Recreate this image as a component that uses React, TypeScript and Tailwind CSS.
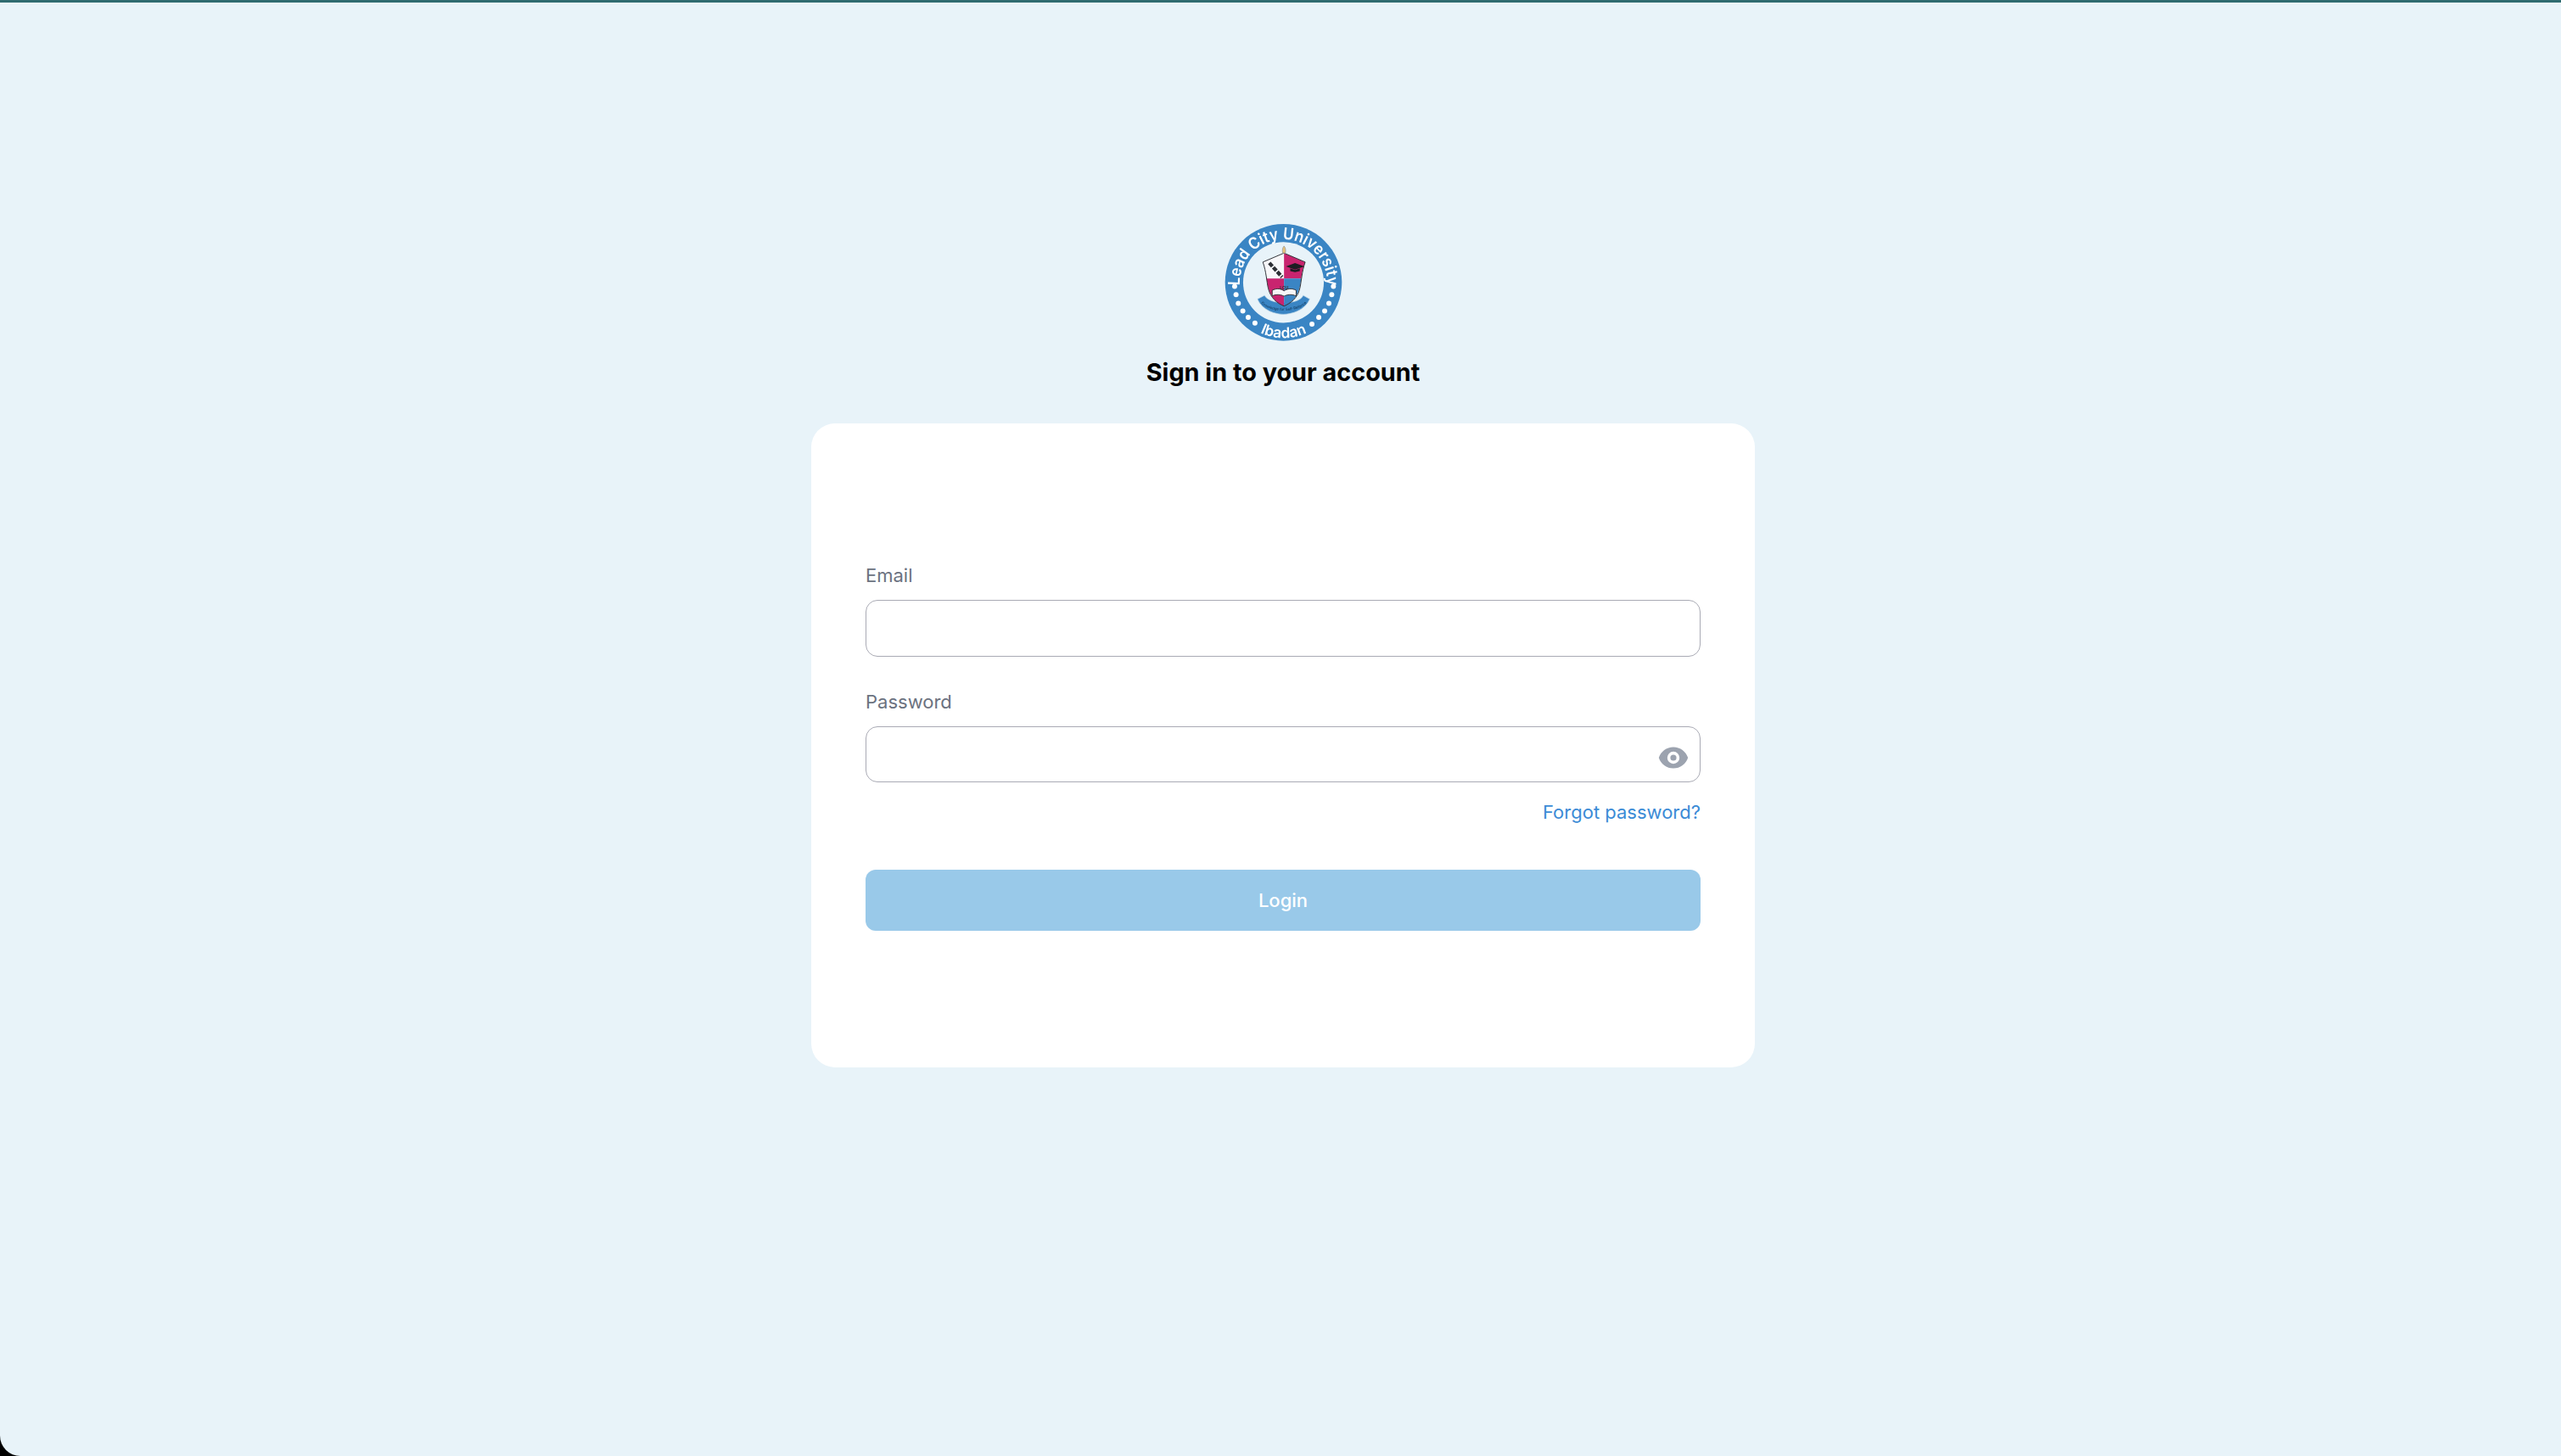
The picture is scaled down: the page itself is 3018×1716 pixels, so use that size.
import { HiEye } from 'react-icons/hi';

function Logo() {
  const dots = [
    [102, 263], [107, 292], [115, 323], [131, 350], [150, 373], [174, 393],
    [452, 263], [446, 292], [436, 323], [421, 350], [400, 373], [376, 397],
  ];
  return (
    <svg viewBox="63 33 424 430" className="h-[143px] w-[141px] blur-[0.4px]">
      <defs>
        <path id="arc-top" d="M 122 276 A 155 155 0 1 1 428 276" />
        <path id="arc-bottom" d="M 78 249 A 197 197 0 0 0 472 249" />
        <path id="arc-ribbon" d="M 195 322 C 225 358 325 358 358 322" />
      </defs>
      <circle cx="275" cy="249" r="207" fill="#3a85c4" />
      <circle cx="275" cy="249" r="143" fill="#e8f3f9" />
      <text fill="#fff" fontFamily="Inter, sans-serif" fontWeight="600" fontSize="57">
        <textPath href="#arc-top" startOffset="50%" textAnchor="middle" textLength="505" lengthAdjust="spacingAndGlyphs">Lead City University</textPath>
      </text>
      <text fill="#fff" fontFamily="Inter, sans-serif" fontWeight="600" fontSize="52">
        <textPath href="#arc-bottom" startOffset="50%" textAnchor="middle">Ibadan</textPath>
      </text>
      {dots.map(([x, y]) => (
        <circle key={`${x}-${y}`} cx={x} cy={y} r="9" fill="#fff" />
      ))}
      {/* crest: ribbon sits behind the shield */}
      <path d="M183 308 L208 295 C225 330 330 330 345 295 L368 308 C350 350 300 362 275 362 C250 362 200 350 183 308Z" fill="#3a85c4" stroke="#b9d4e6" strokeWidth="2" />
      <text fill="#123a5c" fontFamily="Inter, sans-serif" fontSize="13">
        <textPath href="#arc-ribbon" startOffset="50%" textAnchor="middle">Knowledge for Self-Reliance</textPath>
      </text>
      <path d="M202 177 L277 145 L277 235 L215 235 C213 215 208 195 202 177Z" fill="#f7f7f9" />
      <path d="M277 145 L352 177 C345 195 340 215 338 235 L277 235Z" fill="#c9246f" />
      <path d="M215 235 L277 235 L277 333 C245 322 222 295 215 235Z" fill="#c9246f" />
      <path d="M277 235 L338 235 C332 295 308 322 277 333Z" fill="#3a85c4" />
      <path d="M202 177 L277 145 L352 177 C340 210 338 250 333 270 C325 305 300 323 277 333 C254 323 229 305 221 270 C216 250 214 210 202 177Z" fill="none" stroke="#33353a" strokeWidth="3" />
      <path d="M225 180 L270 230" stroke="#2c2e33" strokeWidth="13" strokeDasharray="16 5" />
      <path d="M284 192 L316 180 L349 192 L316 204Z" fill="#1d1d22" />
      <path d="M299 199 V209 L316 213 L333 209 V199 L316 205Z" fill="#1d1d22" />
      <path d="M235 277 C252 268 268 272 277 279 C286 272 304 268 320 277 V297 C304 290 288 292 277 298 C266 292 250 290 235 297Z" fill="#f6f6f8" stroke="#33353a" strokeWidth="3" />
      <text x="277" y="273" fill="#33353a" fontFamily="Inter, sans-serif" fontWeight="700" fontSize="15" textAnchor="middle">LCU</text>
      <path d="M272 145 C270 132 272 126 277 120 C282 126 284 132 282 145Z" fill="#e8c37a" stroke="#8a8f96" strokeWidth="2" />
    </svg>
  );
}

export default function App() {
  return (
    <div className="min-h-screen bg-black font-['Inter',sans-serif]">
      <div className="flex min-h-[1716px] flex-col items-center rounded-bl-[24px] border-t-[3px] border-[#2f6b70] bg-[#e8f3f9] pt-[258px] pl-[6px]">
        <Logo />
        <h1 className="mt-[15px] text-[28.8px] leading-[40px] font-bold text-black">Sign in to your account</h1>
        <div className="mt-[40px] flex h-[759px] w-[1112px] flex-col rounded-[28px] bg-white px-[64px] pt-[163px]">
          <label className="text-[22px] leading-[32px] text-[#6b7280]">Email</label>
          <input className="mt-[13px] h-[67px] rounded-[14px] border border-[#a9aab4] bg-white" />
          <label className="mt-[37px] text-[22px] leading-[32px] text-[#6b7280]">Password</label>
          <div className="relative mt-[13px]">
            <input className="h-[66px] w-full rounded-[14px] border border-[#a9aab4] bg-white" />
            <HiEye className="absolute top-[19px] right-[14px] size-[36px] text-[#9ca3af]" />
          </div>
          <a className="mt-[19px] self-end text-[22px] leading-[32px] text-[#3b8bd6]">Forgot password?</a>
          <button className="mt-[52px] h-[72px] rounded-[12px] bg-[#99c9e9] text-[22px] font-medium text-white">Login</button>
        </div>
      </div>
    </div>
  );
}
